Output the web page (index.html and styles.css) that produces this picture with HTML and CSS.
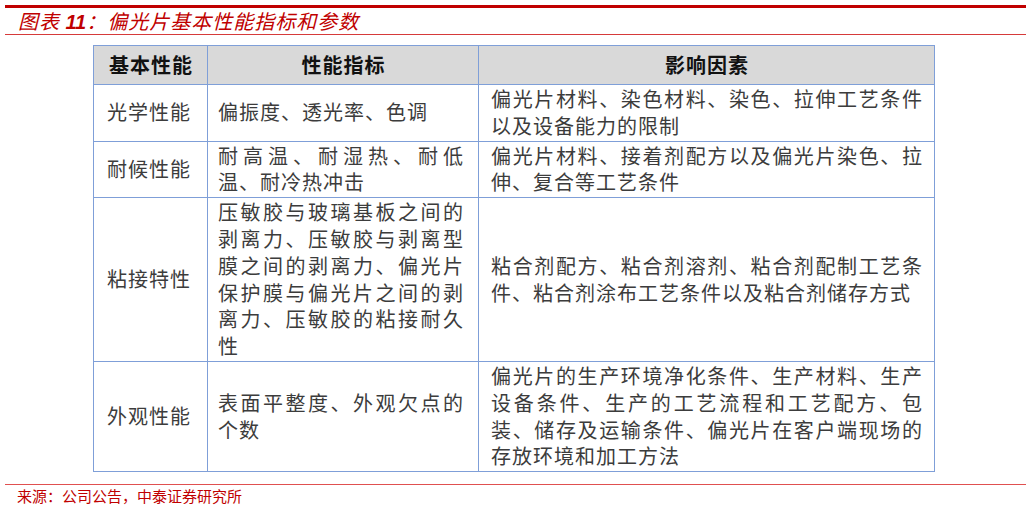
FILE: index.html
```html
<!DOCTYPE html>
<html lang="zh-CN">
<head>
<meta charset="utf-8">
<title>偏光片基本性能指标和参数</title>
<link rel="stylesheet" href="styles.css">
</head>
<body>
<div class="page">
  <div class="topline"></div>
  <div class="title"><span>图表 </span><span class="num">11</span><span>：偏光片基本性能指标和参数</span></div>
  <table class="spec">
    <colgroup>
      <col class="c1"><col class="c2"><col class="c3">
    </colgroup>
    <thead>
      <tr><th>基本性能</th><th>性能指标</th><th>影响因素</th></tr>
    </thead>
    <tbody>
      <tr>
        <td class="name">光学性能</td>
        <td class="mid">偏振度、透光率、色调</td>
        <td class="top">偏光片材料、染色材料、染色、拉伸工艺条件以及设备能力的限制</td>
      </tr>
      <tr>
        <td class="name">耐候性能</td>
        <td class="mid">耐高温、耐湿热、耐低温、耐冷热冲击</td>
        <td class="top">偏光片材料、接着剂配方以及偏光片染色、拉伸、复合等工艺条件</td>
      </tr>
      <tr>
        <td class="name">粘接特性</td>
        <td class="mid">压敏胶与玻璃基板之间的剥离力、压敏胶与剥离型膜之间的剥离力、偏光片保护膜与偏光片之间的剥离力、压敏胶的粘接耐久性</td>
        <td class="mid">粘合剂配方、粘合剂溶剂、粘合剂配制工艺条件、粘合剂涂布工艺条件以及粘合剂储存方式</td>
      </tr>
      <tr>
        <td class="name">外观性能</td>
        <td class="mid">表面平整度、外观欠点的个数</td>
        <td class="top">偏光片的生产环境净化条件、生产材料、生产设备条件、生产的工艺流程和工艺配方、包装、储存及运输条件、偏光片在客户端现场的存放环境和加工方法</td>
      </tr>
    </tbody>
  </table>
  <div class="bottomline"></div>
  <div class="source">来源：公司公告，中泰证券研究所</div>
</div>
</body>
</html>
```
FILE: styles.css
```css
html, body {
  margin: 0;
  padding: 0;
  background: #ffffff;
}
.page {
  padding: 5px 5px 0 5px;
  font-family: "Noto Sans CJK SC", "Noto Sans", sans-serif;
}
.topline {
  height: 3px;
  background: #c00000;
}
.title {
  height: 26px;
  line-height: 26px;
  padding-left: 13px;
  border-bottom: 1px solid #d63a3a;
  color: #c00000;
  font-size: 20px;
  font-style: italic;
  letter-spacing: 1px;
  white-space: nowrap;
}
.title .num {
  font-family: "Liberation Sans", sans-serif;
  font-weight: bold;
  letter-spacing: 0;
}
.spec {
  margin: 10px 0 0 88px;
  width: 841px;
  table-layout: fixed;
  border-collapse: collapse;
  font-size: 20px;
  line-height: 26.8px;
  letter-spacing: 1px;
  color: #3c3c3c;
}
.spec col.c1 { width: 114px; }
.spec col.c2 { width: 271px; }
.spec col.c3 { width: 456px; }
.spec th, .spec td {
  border: 1px solid #7f9fd8;
  padding: 1px 11px 1px 12px;
  vertical-align: middle;
  text-align: justify;
}
.spec th {
  background: #d9d9d9;
  color: #111111;
  font-weight: bold;
  text-align: center;
  height: 38px;
  padding-top: 0;
  padding-bottom: 0;
}
.spec td.name {
  padding-left: 13px;
  text-align: left;
}
.spec td.top {
  vertical-align: top;
}
.spec td:nth-child(2) {
  padding-left: 10px;
  padding-right: 14px;
}
.bottomline {
  margin-top: 12px;
  height: 1px;
  background: #e05050;
}
.source {
  padding-left: 12px;
  margin-top: 1px;
  color: #c00000;
  font-size: 15px;
  line-height: 20px;
  letter-spacing: 0;
}
```
